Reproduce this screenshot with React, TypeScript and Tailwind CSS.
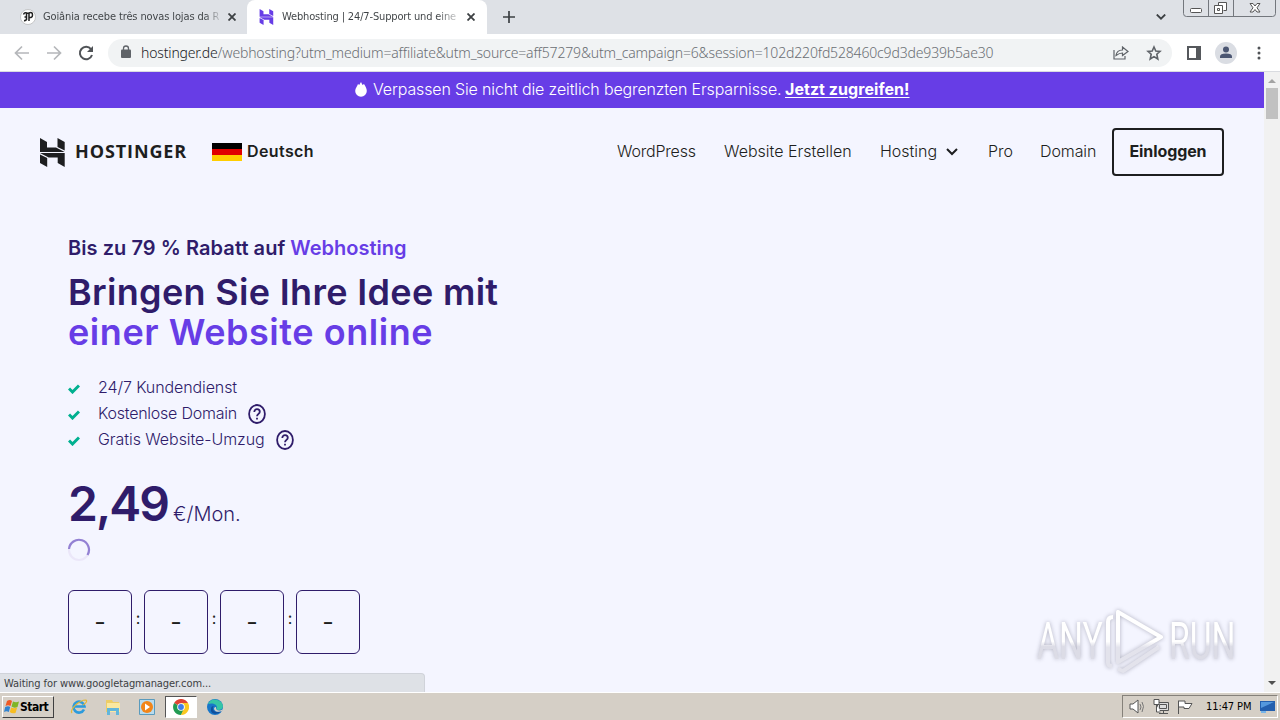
import type { ReactNode } from "react"

const tahoma = "font-[Tahoma,'DejaVu_Sans_Condensed','DejaVu_Sans',sans-serif]"

function HMark({ className = "" }: { className?: string }) {
  return (
    <svg viewBox="0 0 25 29" className={className} fill="currentColor">
      <path d="M0 0L7 4V9.500H16L24.700 14H0zM17.500 0L24.700 4V12.600L17.500 9z" />
      <path d="M0 0L7 4V9.500H16L24.700 14H0zM17.500 0L24.700 4V12.600L17.500 9z" transform="rotate(180 12.350 14.500)" />
    </svg>
  )
}

function CloseIcon() {
  return (
    <svg viewBox="0 0 8 8" className="size-2 shrink-0 text-[#3c4043]" stroke="currentColor" strokeWidth="1.8">
      <path d="M.5.5l7 7M7.500.5l-7 7" />
    </svg>
  )
}

function TabStrip() {
  return (
    <div className={`flex h-[34px] bg-[#dee1e6] text-[11px] text-[#3c4043] ${tahoma}`}>
      <div className="flex w-[247px] items-center pl-5">
        <svg viewBox="0 0 16 16" className="size-4 shrink-0">
          <circle cx="8" cy="8" r="7.500" fill="#fff" stroke="#aaa" strokeWidth=".6" />
          <path d="M3.500 5.500Q4.500 3 6.500 4V10.500Q5.500 12 4 11.500M4.500 8h2M9 12V4Q12.500 2.500 12.500 6 12.500 9 9 8.500M6.500 4.500L9 4" fill="none" stroke="#222" strokeWidth="1.500" />
        </svg>
        <span className="ml-[7px] w-[176px] whitespace-nowrap bg-linear-to-r from-[#3c4043] from-92% to-[#3c4043]/20 bg-clip-text tracking-[-0.12px] text-transparent">Goiânia recebe três novas lojas da R</span>
        <span className="ml-[9px]"><CloseIcon /></span>
      </div>
      <div className="flex w-[240px] items-center rounded-t-lg bg-white pl-3">
        <HMark className="h-4 w-[15px] shrink-0 text-[#673de6]" />
        <span className="ml-2 w-[176px] whitespace-nowrap bg-linear-to-r from-[#3c4043] from-88% to-[#3c4043]/20 bg-clip-text tracking-[-0.15px] text-transparent">Webhosting | 24/7-Support und eine</span>
        <span className="ml-[9px]"><CloseIcon /></span>
      </div>
      <svg viewBox="0 0 12 12" className="mt-[11px] ml-4 size-3" stroke="#3c4043" strokeWidth="1.700">
        <path d="M6 0v12M0 6h12" />
      </svg>
      <svg viewBox="0 0 10 6" className="mt-[14px] ml-auto h-1.5 w-2.5" fill="none" stroke="#3c4043" strokeWidth="1.800">
        <path d="M.8.5L5 4.700 9.200.5" />
      </svg>
      <svg viewBox="0 0 94 18" className="mr-[3px] ml-[17px] h-[18px] w-[94px]" fill="none" stroke="#73777d">
        <path d="M.5 0v13.500q0 3 3 3h86q3 0 3-3V0M25.500 0v16M50.500 0v16" />
        <rect x="7.500" y="8.500" width="11" height="4" rx="1" fill="#fff" stroke="#555" />
        <path d="M35.500 5.500V2.500h8v8h-3M31.500 5.500h8v8h-8zM34.500 8.500h2v2h-2z" fill="#fff" stroke="#555" />
        <path d="M67 3.500h3l2 2.500 2-2.500h3l-3 4.300 3 4.200h-3l-2-2.500-2 2.500h-3l3-4.200z" fill="#fff" stroke="#555" />
      </svg>
    </div>
  )
}

function Toolbar() {
  return (
    <div className="flex h-[38px] items-center border-b border-[#d9dbe0] bg-white">
      <svg viewBox="0 0 80 16" className="ml-[14px] h-4 w-20 shrink-0" fill="none" strokeWidth="1.700">
        <path d="M15 8H1.500M8 1.500L1.500 8 8 14.500M33 8h13.500M40 1.500L46.500 8 40 14.500" stroke="#b5b7ba" />
        <path d="M77 4.200A6.200 6.200 0 1 0 78 10" stroke="#505357" strokeWidth="2" />
        <path d="M79 1v6h-6z" fill="#505357" />
      </svg>
      <div className="ml-[14px] flex h-7 w-[1064px] items-center rounded-full bg-[#f1f3f4] pl-[13px]">
        <svg viewBox="0 0 10 13" className="h-[13px] w-2.5 shrink-0 -translate-y-px" fill="#5f6368">
          <path d="M1 4.500h8q1 0 1 1V12q0 1-1 1H1q-1 0-1-1V5.500q0-1 1-1z" />
          <path d="M2.500 6V3.500a2.500 2.500 0 0 1 5 0V6" fill="none" stroke="#5f6368" strokeWidth="1.300" />
        </svg>
        <span className="ml-[10px] whitespace-nowrap font-[Tahoma,'Noto_Sans',sans-serif] text-sm font-light tracking-[-0.16px] text-[#6a6e73]">
          <span className="text-[#202124]">hostinger.de</span>/webhosting?utm_medium=affiliate&amp;utm_source=aff57279&amp;utm_campaign=6&amp;session=102d220fd528460c9d3de939b5ae30
        </span>
        <svg viewBox="0 0 16 14" className="mr-[17px] ml-auto h-3.5 w-4 shrink-0" fill="none" stroke="#5f6368" strokeWidth="1.200">
          <path d="M1 4v9h11v-3M3 9.500C3.500 6 6 4 9.500 4V1L15 5.500 9.500 9.500V7C7 7 5 8 3 9.500z" />
        </svg>
        <svg viewBox="0 0 24 24" className="mr-[10px] size-4 shrink-0" fill="none" stroke="#5f6368" strokeWidth="2.400" strokeLinejoin="miter">
          <path d="M12 3l2.700 6 6.300.6-4.800 4.300L17.700 21 12 17.400 6.300 21l1.500-7.100L3 9.600 9.300 9z" />
        </svg>
      </div>
      <svg viewBox="0 0 14 14" className="ml-[15px] size-3.5 shrink-0">
        <path d="M1 1h12v12H1z" fill="none" stroke="#55585c" strokeWidth="2" />
        <path d="M9 1h5v12H9z" fill="#55585c" />
      </svg>
      <svg viewBox="0 0 22 22" className="ml-[14px] size-[22px] shrink-0" fill="#4b5672">
        <circle cx="11" cy="11" r="11" fill="#dadde3" />
        <circle cx="11" cy="7.500" r="3" />
        <path d="M5 16v-1.500q0-3 6-3t6 3V16z" />
      </svg>
      <svg viewBox="0 0 4 14" className="ml-5 h-3.5 w-1 shrink-0" fill="#505357">
        <circle cx="2" cy="2" r="1.500" /><circle cx="2" cy="7" r="1.500" /><circle cx="2" cy="12" r="1.500" />
      </svg>
    </div>
  )
}

function Banner() {
  return (
    <div className="flex h-9 items-center bg-[#673de6] pb-0.5 pl-[355px] text-base text-white">
      <svg viewBox="0 0 12 15" className="h-[15px] w-3" fill="currentColor">
        <path d="M6 0l1.500 3 1.500-1c1.500 2.500 2.800 4.500 2.800 7A5.800 5.800 0 0 1 .2 9C.2 6 2.500 4 3 2l1.200 1z" />
      </svg>
      <span className="ml-1.5 w-[408px] whitespace-nowrap font-[350] tracking-[-0.14px]">Verpassen Sie nicht die zeitlich begrenzten Ersparnisse.</span>
      <span className="ml-1 whitespace-nowrap font-bold tracking-[0.05px] underline underline-offset-2">Jetzt zugreifen!</span>
    </div>
  )
}

function Header() {
  return (
    <div className="flex h-[88px] items-center pl-10 font-[350] text-[#1d1e20] [&>span]:pb-0.5">
      <HMark className="h-[29px] w-[25px]" />
      <span className="ml-[10px] w-[112px] whitespace-nowrap font-['Open_Sans',sans-serif] text-[18px] font-bold tracking-[0.9px]">HOSTINGER</span>
      <div className="ml-[25px] flex h-[18px] w-[30px] flex-col">
        <div className="flex-1 bg-black" />
        <div className="flex-1 bg-[#e00000]" />
        <div className="flex-1 bg-[#ffce00]" />
      </div>
      <span className="ml-[5px] w-[370px] text-base font-semibold tracking-[0.4px]">Deutsch</span>
      <span className="w-[107px] whitespace-nowrap tracking-[-0.2px]">WordPress</span>
      <span className="w-[156px] whitespace-nowrap">Website Erstellen</span>
      <span className="w-[66px]">Hosting</span>
      <svg viewBox="0 0 12 8" className="mr-[30px] h-2 w-3" fill="none" stroke="currentColor" strokeWidth="2">
        <path d="M1 1l5 5 5-5" />
      </svg>
      <span className="w-[52px]">Pro</span>
      <span className="w-[72px] tracking-[-0.1px]">Domain</span>
      <span className="flex h-12 w-28 items-center justify-center rounded border-2 border-[#1d1e20] font-bold tracking-[-0.1px]">Einloggen</span>
    </div>
  )
}

function Feature({ children, width, help }: { children: ReactNode; width: string; help?: boolean }) {
  return (
    <div className="flex h-[26px] items-center">
      <svg viewBox="0 0 12 10" className="mt-[2px] mr-[18px] h-2.5 w-3" fill="none" stroke="#00b090" strokeWidth="3">
        <path d="M1 4.500L4.500 8 11 1.500" />
      </svg>
      <span className={`pb-0.5 font-[350] whitespace-nowrap ${width}`}>{children}</span>
      {help && (
        <svg viewBox="0 0 18 20" className="ml-[11px] h-5 w-[18px]" fill="none" stroke="currentColor" strokeWidth="1.800">
          <ellipse cx="9" cy="10" rx="7.900" ry="9" />
          <path d="M6.300 8c0-4 5.500-3.500 5.500-.3 0 2-2.800 2.300-2.800 4.600M9 13.800v1.700" />
        </svg>
      )}
    </div>
  )
}

function Hero() {
  return (
    <div className="flex flex-col pl-[68px] text-[#2f1c6a]">
      <div className="mt-[37px] h-[30px] whitespace-nowrap text-[20px] leading-[30px] font-semibold">
        <span className="tracking-[0.06px]">Bis zu 79 % Rabatt auf</span> <span className="text-[#673de6]">Webhosting</span>
      </div>
      <h1 className="mt-[9px] whitespace-nowrap text-[36px] leading-10 font-semibold">
        <span className="tracking-[0.32px]">Bringen Sie Ihre Idee mit</span>
        <br />
        <span className="tracking-[0.55px] text-[#673de6]">einer Website online</span>
      </h1>
      <div className="mt-[23px]">
        <Feature width="w-[140px] tracking-[-0.1px]">24/7 Kundendienst</Feature>
        <Feature width="w-[139px] tracking-[-0.24px]" help>Kostenlose Domain</Feature>
        <Feature width="w-[167px] tracking-[-0.06px]" help>Gratis Website-Umzug</Feature>
      </div>
      <div className="mt-[21px] flex h-[60px] items-baseline whitespace-nowrap">
        <span className="w-[105px] text-[48px] leading-[60px] font-semibold tracking-[-2px]">2,49</span>
        <span className="text-[20px] font-[350]">€/Mon.</span>
      </div>
      <svg viewBox="0 0 24 24" className="mt-[4px] -ml-px size-6" fill="none" strokeWidth="2.200">
        <circle cx="12" cy="12" r="10" stroke="#ebe7f9" />
        <path d="M2 11A10 10 0 1 1 20.500 17" stroke="#9381d3" />
      </svg>
      <div className="mt-[28px] flex">
        {[0, 1, 2, 3].map((i) => (
          <div key={i} className="flex items-center">
            {i > 0 && <span className="w-3 pb-2 text-center text-base text-[#1d1e20]">:</span>}
            <div className="flex size-16 items-center justify-center rounded-md border border-[#2f1c6a] text-base font-bold text-[#1d1e20]">–</div>
          </div>
        ))}
      </div>
    </div>
  )
}

function WatermarkWord({ children }: { children: string }) {
  return (
    <div className="w-[63px]">
      <span className="inline-block origin-left scale-x-[0.66] bg-linear-to-b from-white from-50% to-[#dcdce6] to-60% bg-clip-text font-['Roboto',sans-serif] text-[51px] leading-none font-normal text-transparent">{children}</span>
    </div>
  )
}

function Watermark() {
  return (
    <div className="absolute top-[535px] left-[1037px] flex h-[68px] w-[195px] items-center justify-between drop-shadow-[0_0_2px_rgba(90,90,110,0.45)]">
      <WatermarkWord>ANY</WatermarkWord>
      <svg viewBox="0 0 60 66" className="h-[66px] w-[60px] shrink-0" fill="none" stroke="url(#mark)" strokeWidth="4" strokeLinejoin="round">
        <defs>
          <linearGradient id="mark" x1="0" y1="0" x2="0" y2="1">
            <stop offset=".5" stopColor="#fff" />
            <stop offset=".6" stopColor="#e3e3ec" />
          </linearGradient>
        </defs>
        <path d="M13 13v41L56 29 13 4v10M8 9q-5 0-5 5v41q0 3 4 3M13 61l5 2 36-24" />
      </svg>
      <WatermarkWord>RUN</WatermarkWord>
    </div>
  )
}

function Taskbar() {
  return (
    <div className={`flex h-7 items-center border-t border-white bg-[#d5cfc6] text-[11px] text-black ${tahoma}`}>
      <div className="ml-0.5 flex h-[22px] w-[52px] items-center border border-t-white border-r-[#404040] border-b-[#404040] border-l-white pl-px font-bold">
        <svg viewBox="0 0 16 16" className="size-4 shrink-0">
          <path d="M3 2q3-2 5 0L6.500 7Q4 5.500 1.500 7z" fill="#ef5a24" />
          <path d="M9 2.500q3 1.500 6 0L13.500 8Q10 9.500 7.500 7.500z" fill="#7fb526" />
          <path d="M1.200 8q3-1.500 5 0L4.800 13Q2.500 11.500 0 13z" fill="#3183cf" />
          <path d="M7.200 8.500q3 1.500 6 0L11.500 14Q8 15 5.800 13z" fill="#f7bd22" />
        </svg>
        <span className="text-xs tracking-[-0.5px]">Start</span>
      </div>
      <svg viewBox="0 0 18 18" className="ml-4 size-[18px]" fill="none">
        <path d="M14 11.500A5.500 5.500 0 1 1 14.500 8.500H5" stroke="#2c9bdc" strokeWidth="2.600" />
        <path d="M2 15C-1 12 9 2 16 2c2 1-1 4-3 5" stroke="#e4b832" strokeWidth="1.200" />
      </svg>
      <svg viewBox="0 0 18 18" className="ml-4 size-[18px]">
        <path d="M2 2h6l1 2h6v10H2z" fill="#edcd66" />
        <path d="M3 5h13v9H3z" fill="#fae8a0" />
        <path d="M3 17v-7h12v7h-3v-4H6v4z" fill="#62b6db" />
      </svg>
      <svg viewBox="0 0 18 18" className="ml-4 size-[18px]">
        <path d="M1.500 1.500h15v15h-15z" fill="#b9dbed" stroke="#5a9bbd" />
        <circle cx="9" cy="9" r="6" fill="#f28518" /><path d="M7 5.500l5 3.500-5 3.500z" fill="#fff" />
      </svg>
      <div className="ml-[9px] flex h-[22px] w-8 items-center justify-center border border-t-[#555] border-r-white border-b-white border-l-[#555] bg-white">
        <svg viewBox="0 0 16 16" className="size-4">
          <path d="M8 8L1.100 4A8 8 0 0 1 15 4z" fill="#df4435" />
          <path d="M8 8L1.100 4A8 8 0 0 0 8 16l3.500-6z" fill="#229b53" />
          <path d="M8 8h3.500L8 16A8 8 0 0 0 15 4H8z" fill="#fac821" />
          <circle cx="8" cy="8" r="3.800" fill="#fff" /><circle cx="8" cy="8" r="2.900" fill="#3e7ee9" />
        </svg>
      </div>
      <svg viewBox="0 0 16 16" className="ml-[10px] size-4">
        <circle cx="8" cy="8" r="8" fill="#1876c9" />
        <path d="M1 5A8 8 0 0 1 16 7c0 4-5 5-7 3 3-3-2-7-8-5z" fill="#36c5a6" />
        <path d="M6 8c-1 5 4 6 8 4-2 4-11 4-10-2 0-2 1-3 3-3z" fill="#104f9c" />
        <path d="M9 10c2 2 4 2 7 0l-1 2c-3 1.500-7 1-8-2 0-2 2-2 2-2z" fill="#d5cfc6" />
      </svg>
      <div className="mr-0.5 ml-auto flex h-[23px] w-[156px] items-center border border-t-[#85817a] border-r-white border-b-white border-l-[#85817a] pl-[6px]">
        <svg viewBox="0 0 68 18" className="h-[18px] w-[68px] shrink-0" fill="#fff" stroke="#555">
          <path d="M1 6h3l5-4v13l-5-4H1z" />
          <path d="M11 6q2 3 0 6M13 4q3 4 0 10" fill="none" stroke="#777" />
          <path d="M28.500 4.500h11v8h-11zM30.500 6.500h7v4h-7z" fill="#ddd" />
          <path d="M30 15.500h9M34.500 13v2M25 1.500h5v5h-5zM27.500 7v7h4" />
          <path d="M49.500 16V2.500M50 3h6v2.500h7l-3 5h-5V9h-5" />
        </svg>
        <span className="ml-[9px] w-[46px] shrink-0 whitespace-nowrap pt-0.5 tracking-[-0.1px]">11:47 PM</span>
        <svg viewBox="0 0 15 13" className="ml-[8px] h-[13px] w-[15px] shrink-0">
          <path d="M0 1h15v10H0z" fill="#245fae" /><path d="M1 2h13L1 8z" fill="#5598dd" /><path d="M1 11h5v2H1z" fill="#78b5e8" />
        </svg>
      </div>
    </div>
  )
}

export default function App() {
  return (
    <div className="flex h-[720px] w-[1280px] flex-col overflow-hidden">
      <TabStrip />
      <Toolbar />
      <div className="relative flex h-[620px] shrink-0 bg-[#f4f5ff] font-['Inter',sans-serif]">
        <div className="w-[1264px]">
          <Banner />
          <Header />
          <Hero />
        </div>
        <div className="flex w-4 flex-col items-center bg-[#f1f1f1]">
          <svg viewBox="0 0 8 4" className="mt-[7px] h-1 w-2 shrink-0" fill="#a3a3a3"><path d="M0 4l4-4 4 4z" /></svg>
          <div className="mt-[5px] h-[31px] w-3 bg-[#c1c1c1]" />
          <svg viewBox="0 0 8 4" className="mt-auto mb-[7px] h-1 w-2 shrink-0" fill="#505050"><path d="M0 0l4 4 4-4z" /></svg>
        </div>
        <Watermark />
        <div className={`absolute bottom-0 left-0 h-[19px] w-[425px] rounded-tr border-t border-r border-[#d0d3da] bg-[#dee1e6] pl-1 text-[11px] leading-[19px] tracking-[-0.08px] text-[#3c4043] ${tahoma}`}>Waiting for www.googletagmanager.com...</div>
      </div>
      <Taskbar />
    </div>
  )
}
